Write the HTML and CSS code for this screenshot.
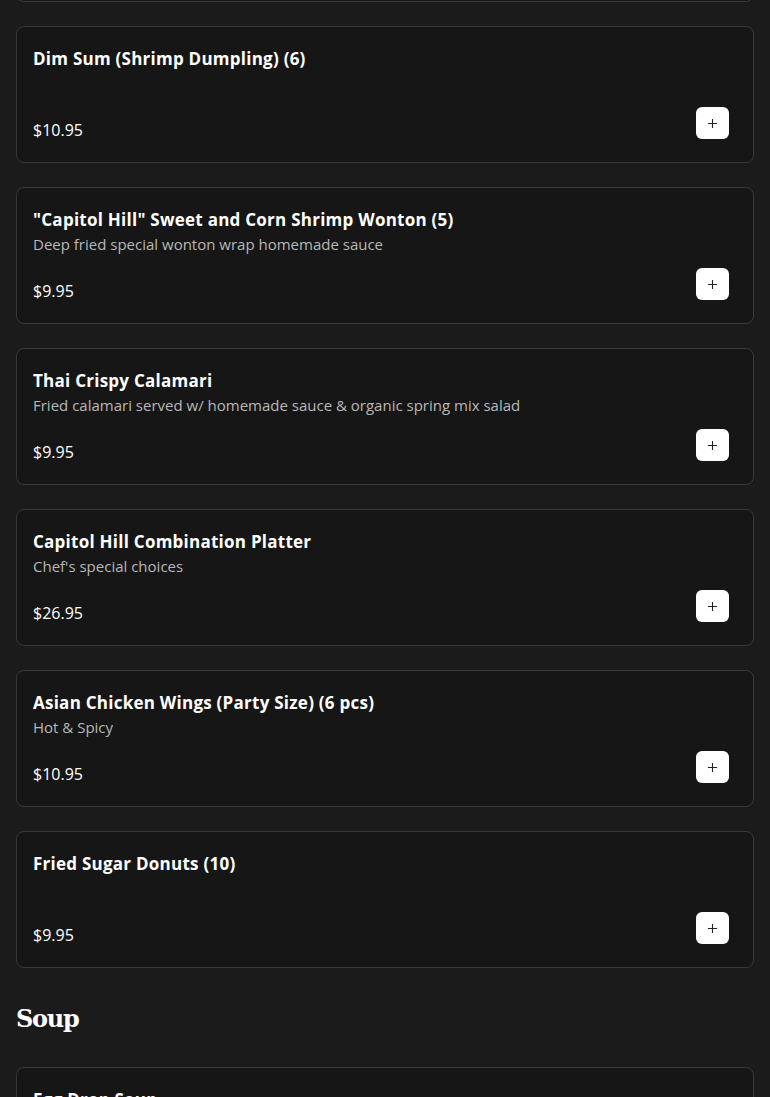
FILE: index.html
```html
<!DOCTYPE html>
<html lang="en">
<head>
    <meta charset="UTF-8">
    <meta name="viewport" content="width=device-width, initial-scale=1.0">
    <title>Menu - Appetizers</title>
    <link rel="stylesheet" href="styles.css">
</head>
<body>
<svg style="display:none;">
    <symbol id="icon-plus" viewBox="0 0 12 12">
        <path d="M6 1v10M1 6h10" stroke="#222" stroke-width="1.2" fill="none"/>
    </symbol>
</svg>

<div class="menu">
    <div class="item-list">
        <div class="item item-prev">
            <div class="item-info">
                <h3 class="item-name">Crab Rangoon (6)</h3>
                <p class="item-desc"></p>
                <div class="item-price">$8.95</div>
            </div>
            <button class="add-btn" aria-label="Add"><svg class="icon"><use href="#icon-plus"/></svg></button>
        </div>

        <div class="item">
            <div class="item-info">
                <h3 class="item-name">Dim Sum (Shrimp Dumpling) (6)</h3>
                <p class="item-desc"></p>
                <div class="item-price">$10.95</div>
            </div>
            <button class="add-btn" aria-label="Add"><svg class="icon"><use href="#icon-plus"/></svg></button>
        </div>

        <div class="item">
            <div class="item-info">
                <h3 class="item-name">"Capitol Hill" Sweet and Corn Shrimp Wonton (5)</h3>
                <p class="item-desc">Deep fried special wonton wrap homemade sauce</p>
                <div class="item-price">$9.95</div>
            </div>
            <button class="add-btn" aria-label="Add"><svg class="icon"><use href="#icon-plus"/></svg></button>
        </div>

        <div class="item">
            <div class="item-info">
                <h3 class="item-name">Thai Crispy Calamari</h3>
                <p class="item-desc">Fried calamari served w/ homemade sauce &amp; organic spring mix salad</p>
                <div class="item-price">$9.95</div>
            </div>
            <button class="add-btn" aria-label="Add"><svg class="icon"><use href="#icon-plus"/></svg></button>
        </div>

        <div class="item">
            <div class="item-info">
                <h3 class="item-name">Capitol Hill Combination Platter</h3>
                <p class="item-desc">Chef's special choices</p>
                <div class="item-price">$26.95</div>
            </div>
            <button class="add-btn" aria-label="Add"><svg class="icon"><use href="#icon-plus"/></svg></button>
        </div>

        <div class="item">
            <div class="item-info">
                <h3 class="item-name">Asian Chicken Wings (Party Size) (6 pcs)</h3>
                <p class="item-desc">Hot &amp; Spicy</p>
                <div class="item-price">$10.95</div>
            </div>
            <button class="add-btn" aria-label="Add"><svg class="icon"><use href="#icon-plus"/></svg></button>
        </div>

        <div class="item">
            <div class="item-info">
                <h3 class="item-name">Fried Sugar Donuts (10)</h3>
                <p class="item-desc"></p>
                <div class="item-price">$9.95</div>
            </div>
            <button class="add-btn" aria-label="Add"><svg class="icon"><use href="#icon-plus"/></svg></button>
        </div>
    </div>

    <h2 class="section-title">Soup</h2>

    <div class="item-list">
        <div class="item">
            <div class="item-info">
                <h3 class="item-name">Egg Drop Soup</h3>
                <p class="item-desc"></p>
                <div class="item-price">$4.95</div>
            </div>
            <button class="add-btn" aria-label="Add"><svg class="icon"><use href="#icon-plus"/></svg></button>
        </div>
    </div>
</div>
</body>
</html>
```

FILE: styles.css
```css
body {
    font-family: "Open Sans", "DejaVu Sans", sans-serif;
    background-color: #1b1b1b;
    color: #fff;
    margin: 0;
    padding: 0 16px;
}

.menu {
    overflow: hidden;
}

.item-list {
    display: flex;
    flex-direction: column;
    gap: 24px;
}

.item {
    display: flex;
    justify-content: space-between;
    background: #161616;
    border: 1px solid #393939;
    border-radius: 8px;
    padding: 19px 16px 19px 16px;
}

.item-prev {
    margin-top: -135px;
}

.item-name {
    font-size: 17px;
    font-weight: 700;
    line-height: 26px;
    letter-spacing: 0.25px;
    margin: 0;
}

.item-desc {
    font-size: 15px;
    line-height: 22px;
    color: #b8b8b8;
    margin: 0;
    min-height: 22px;
}

.item-price {
    font-size: 16px;
    line-height: 26px;
    margin-top: 23px;
}

.add-btn {
    align-self: flex-end;
    width: 33px;
    height: 32px;
    margin: 0 8px 4px 0;
    padding: 0;
    border: none;
    border-radius: 6px;
    background: #fff;
    display: flex;
    align-items: center;
    justify-content: center;
    cursor: pointer;
}

.icon {
    width: 11px;
    height: 11px;
}

.section-title {
    font-family: "DejaVu Serif", serif;
    font-size: 24px;
    font-weight: 700;
    line-height: 32px;
    letter-spacing: -1.3px;
    margin: 35px 0 32px;
}
```
